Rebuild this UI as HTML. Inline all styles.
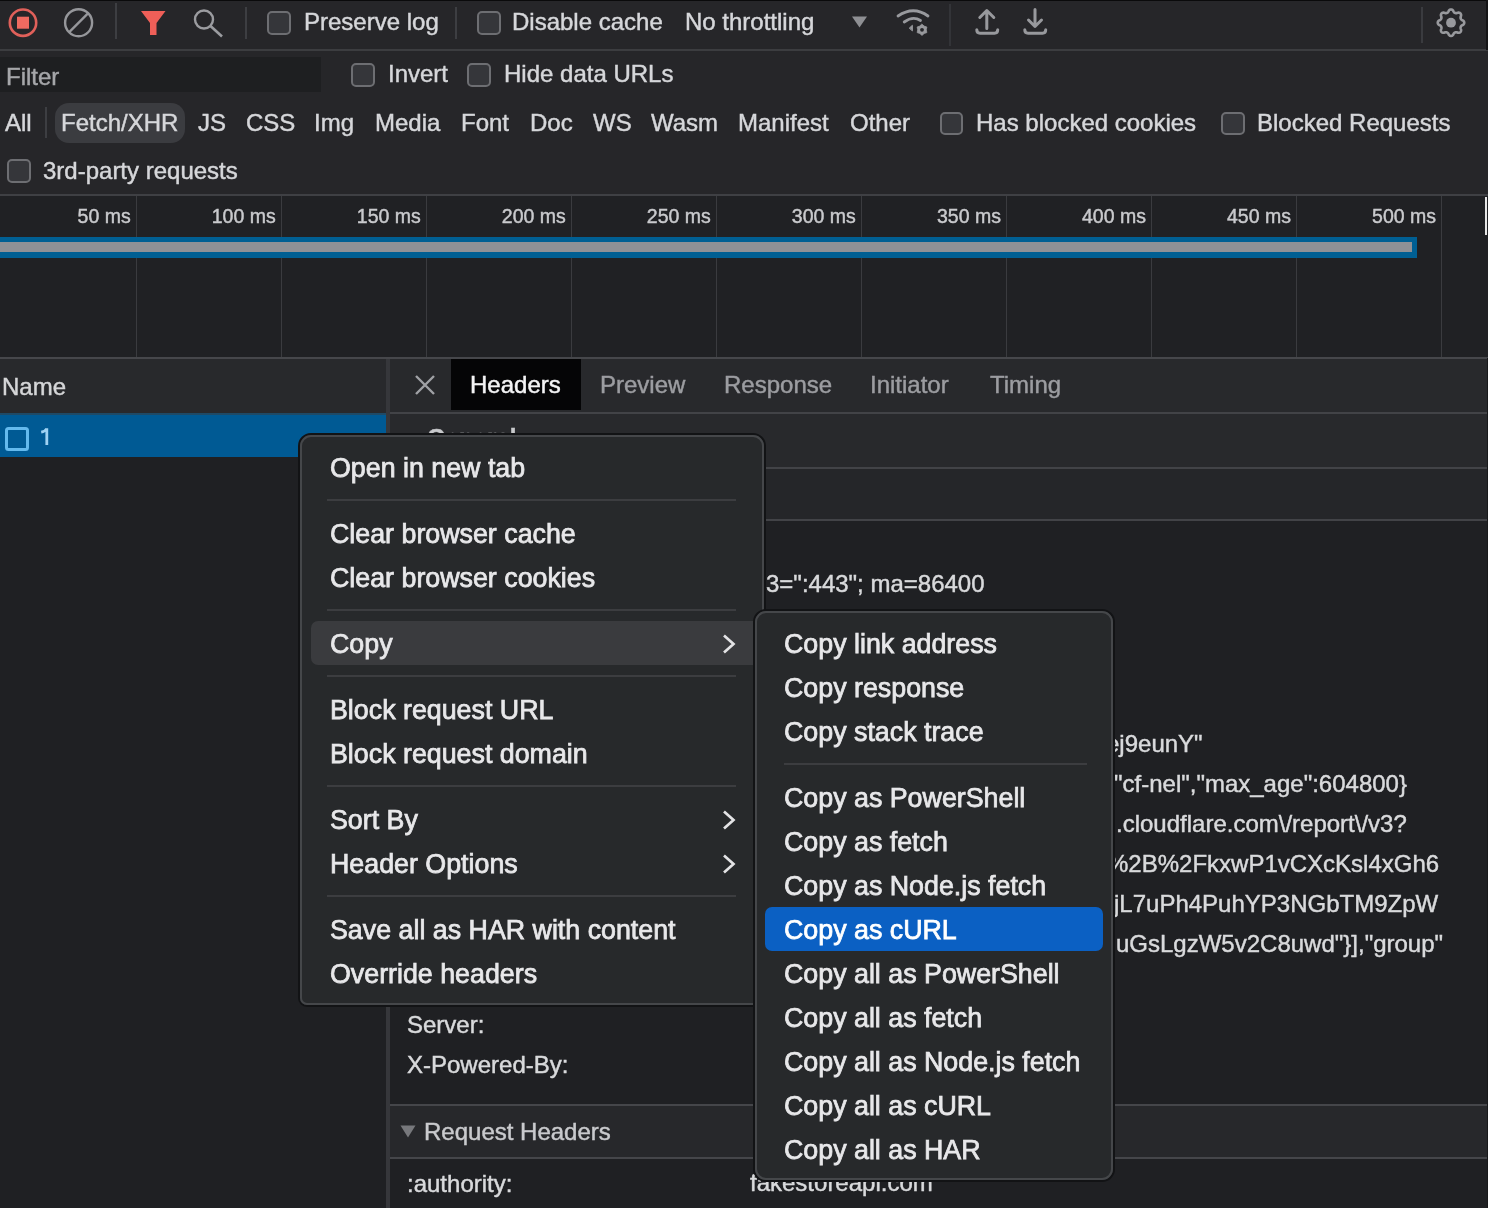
<!DOCTYPE html>
<html><head><meta charset="utf-8">
<style>
*{margin:0;padding:0;box-sizing:border-box}
html,body{width:1488px;height:1208px;overflow:hidden;background:#1f2023;font-family:"Liberation Sans",sans-serif;color:#e3e3e3}
.a{position:absolute}
.t{position:absolute;white-space:nowrap;line-height:1;will-change:transform;-webkit-text-stroke:0.45px currentColor}
.cb{position:absolute;border:2px solid #6d6e72;border-radius:5px;background:#35363a}
svg{position:absolute;overflow:visible}
</style></head><body>
<div class="a" style="left:0px;top:0px;width:1488px;height:50px;background:#262629;"></div>
<div class="a" style="left:0px;top:0px;width:1488px;height:1px;background:#0a0a0b;"></div>
<div class="a" style="left:0px;top:49px;width:1488px;height:2px;background:#3c3d40;"></div>
<svg style="left:0;top:0" width="60" height="50"><circle cx="23" cy="22.7" r="13.2" fill="none" stroke="#e0605a" stroke-width="2.6"/><rect x="17" y="16.7" width="12" height="12" fill="#ee6a60"/></svg>
<svg style="left:50px;top:0" width="60" height="50"><circle cx="28.6" cy="22.7" r="13.5" fill="none" stroke="#96979b" stroke-width="2.4"/><line x1="19" y1="32.3" x2="38.2" y2="13.1" stroke="#96979b" stroke-width="2.4"/></svg>
<div class="a" style="left:115px;top:3px;width:2px;height:36px;background:#3d3e42;"></div>
<svg style="left:130px;top:0" width="50" height="50"><path d="M11 11 H35.5 L26.5 23 V35 H20 V23 Z" fill="#ee5f58"/></svg>
<svg style="left:180px;top:0" width="60" height="50"><circle cx="24" cy="19.5" r="9" fill="none" stroke="#9b9ca0" stroke-width="2.4"/><line x1="30.5" y1="26" x2="42" y2="36.5" stroke="#9b9ca0" stroke-width="2.6"/></svg>
<div class="a" style="left:245px;top:7px;width:2px;height:32px;background:#3d3e42;"></div>
<div class="cb" style="left:267px;top:11px;width:24px;height:24px"></div>
<div class="t" style="left:304px;top:10.38px;font-size:24px;color:#d6d7da;">Preserve log</div>
<div class="a" style="left:455px;top:7px;width:2px;height:32px;background:#3d3e42;"></div>
<div class="cb" style="left:477px;top:11px;width:24px;height:24px"></div>
<div class="t" style="left:512px;top:10.38px;font-size:24px;color:#d6d7da;">Disable cache</div>
<div class="t" style="left:685px;top:10.38px;font-size:24px;color:#d6d7da;">No throttling</div>
<svg style="left:840px;top:0" width="40" height="50"><path d="M12 16.5 H27 L19.5 27.5 Z" fill="#8e8f93"/></svg>
<svg style="left:0;top:0" width="1488" height="50" fill="none" stroke="#98999d" stroke-linecap="round" stroke-linejoin="round">
<path d="M898 16 Q913.5 5.5 928 16" stroke-width="2.8"/><path d="M904.2 22 Q913 15.5 920.5 20.5" stroke-width="2.8"/>
<path d="M909.5 27.9 L912.4 25.3 L912.4 30.5Z" fill="#98999d" stroke-width="1"/>
<path d="M922.00 24.20 L924.15 26.08 L926.85 27.00 L926.30 29.80 L926.85 32.60 L924.15 33.52 L922.00 35.40 L919.85 33.52 L917.15 32.60 L917.70 29.80 L917.15 27.00 L919.85 26.08Z" fill="#98999d" stroke-width="0.8"/><circle cx="922" cy="29.8" r="1.9" fill="#26272a" stroke="none"/>
<path d="M986.8 28.4V10.8M979.8 17.5L986.8 10.5L993.8 17.5" stroke-width="3"/>
<path d="M976.8 29.8Q976.8 33.2 980 33.2H994.5Q997.7 33.2 997.7 29.8" stroke-width="3"/>
<path d="M1035 9.5V26.2M1028.5 20L1035 26.5L1041.5 20" stroke-width="3"/>
<path d="M1024.8 29.8Q1024.8 33.2 1028 33.2H1042.5Q1045.7 33.2 1045.7 29.8" stroke-width="3"/>
</svg>
<div class="a" style="left:949px;top:4px;width:2px;height:42px;background:#333438;"></div>
<div class="a" style="left:1421px;top:7px;width:2px;height:36px;background:#3a3b3f;"></div>
<svg style="left:0;top:0" width="1488" height="50"><path d="M1451.00 9.45 L1451.35 9.48 L1451.69 9.55 L1452.02 9.68 L1452.35 9.85 L1452.66 10.08 L1452.95 10.36 L1453.22 10.73 L1453.42 11.33 L1453.64 11.71 L1453.86 12.01 L1454.09 12.27 L1454.32 12.49 L1454.55 12.68 L1454.79 12.83 L1455.04 12.95 L1455.30 13.04 L1455.58 13.10 L1455.87 13.13 L1456.19 13.14 L1456.53 13.11 L1456.91 13.06 L1457.33 12.95 L1457.90 12.66 L1458.34 12.59 L1458.75 12.60 L1459.13 12.66 L1459.48 12.77 L1459.81 12.91 L1460.11 13.10 L1460.37 13.33 L1460.60 13.59 L1460.79 13.89 L1460.93 14.22 L1461.04 14.57 L1461.10 14.95 L1461.11 15.36 L1461.04 15.80 L1460.75 16.37 L1460.64 16.79 L1460.59 17.17 L1460.56 17.51 L1460.57 17.83 L1460.60 18.12 L1460.66 18.40 L1460.75 18.66 L1460.87 18.91 L1461.02 19.15 L1461.21 19.38 L1461.43 19.61 L1461.69 19.84 L1461.99 20.06 L1462.37 20.28 L1462.97 20.48 L1463.34 20.75 L1463.62 21.04 L1463.85 21.35 L1464.02 21.68 L1464.15 22.01 L1464.22 22.35 L1464.25 22.70 L1464.22 23.05 L1464.15 23.39 L1464.02 23.72 L1463.85 24.05 L1463.62 24.36 L1463.34 24.65 L1462.97 24.92 L1462.37 25.12 L1461.99 25.34 L1461.69 25.56 L1461.43 25.79 L1461.21 26.02 L1461.02 26.25 L1460.87 26.49 L1460.75 26.74 L1460.66 27.00 L1460.60 27.28 L1460.57 27.57 L1460.56 27.89 L1460.59 28.23 L1460.64 28.61 L1460.75 29.03 L1461.04 29.60 L1461.11 30.04 L1461.10 30.45 L1461.04 30.83 L1460.93 31.18 L1460.79 31.51 L1460.60 31.81 L1460.37 32.07 L1460.11 32.30 L1459.81 32.49 L1459.48 32.63 L1459.13 32.74 L1458.75 32.80 L1458.34 32.81 L1457.90 32.74 L1457.33 32.45 L1456.91 32.34 L1456.53 32.29 L1456.19 32.26 L1455.87 32.27 L1455.58 32.30 L1455.30 32.36 L1455.04 32.45 L1454.79 32.57 L1454.55 32.72 L1454.32 32.91 L1454.09 33.13 L1453.86 33.39 L1453.64 33.69 L1453.42 34.07 L1453.22 34.67 L1452.95 35.04 L1452.66 35.32 L1452.35 35.55 L1452.02 35.72 L1451.69 35.85 L1451.35 35.92 L1451.00 35.95 L1450.65 35.92 L1450.31 35.85 L1449.98 35.72 L1449.65 35.55 L1449.34 35.32 L1449.05 35.04 L1448.78 34.67 L1448.58 34.07 L1448.36 33.69 L1448.14 33.39 L1447.91 33.13 L1447.68 32.91 L1447.45 32.72 L1447.21 32.57 L1446.96 32.45 L1446.70 32.36 L1446.42 32.30 L1446.13 32.27 L1445.81 32.26 L1445.47 32.29 L1445.09 32.34 L1444.67 32.45 L1444.10 32.74 L1443.66 32.81 L1443.25 32.80 L1442.87 32.74 L1442.52 32.63 L1442.19 32.49 L1441.89 32.30 L1441.63 32.07 L1441.40 31.81 L1441.21 31.51 L1441.07 31.18 L1440.96 30.83 L1440.90 30.45 L1440.89 30.04 L1440.96 29.60 L1441.25 29.03 L1441.36 28.61 L1441.41 28.23 L1441.44 27.89 L1441.43 27.57 L1441.40 27.28 L1441.34 27.00 L1441.25 26.74 L1441.13 26.49 L1440.98 26.25 L1440.79 26.02 L1440.57 25.79 L1440.31 25.56 L1440.01 25.34 L1439.63 25.12 L1439.03 24.92 L1438.66 24.65 L1438.38 24.36 L1438.15 24.05 L1437.98 23.72 L1437.85 23.39 L1437.78 23.05 L1437.75 22.70 L1437.78 22.35 L1437.85 22.01 L1437.98 21.68 L1438.15 21.35 L1438.38 21.04 L1438.66 20.75 L1439.03 20.48 L1439.63 20.28 L1440.01 20.06 L1440.31 19.84 L1440.57 19.61 L1440.79 19.38 L1440.98 19.15 L1441.13 18.91 L1441.25 18.66 L1441.34 18.40 L1441.40 18.12 L1441.43 17.83 L1441.44 17.51 L1441.41 17.17 L1441.36 16.79 L1441.25 16.37 L1440.96 15.80 L1440.89 15.36 L1440.90 14.95 L1440.96 14.57 L1441.07 14.22 L1441.21 13.89 L1441.40 13.59 L1441.63 13.33 L1441.89 13.10 L1442.19 12.91 L1442.52 12.77 L1442.87 12.66 L1443.25 12.60 L1443.66 12.59 L1444.10 12.66 L1444.67 12.95 L1445.09 13.06 L1445.47 13.11 L1445.81 13.14 L1446.13 13.13 L1446.42 13.10 L1446.70 13.04 L1446.96 12.95 L1447.21 12.83 L1447.45 12.68 L1447.68 12.49 L1447.91 12.27 L1448.14 12.01 L1448.36 11.71 L1448.58 11.33 L1448.78 10.73 L1449.05 10.36 L1449.34 10.08 L1449.65 9.85 L1449.98 9.68 L1450.31 9.55 L1450.65 9.48Z" fill="none" stroke="#98999d" stroke-width="2.6" stroke-linejoin="round"/><circle cx="1451" cy="22.7" r="4.9" fill="#98999d"/></svg>
<div class="a" style="left:1486px;top:0px;width:2px;height:50px;background:#141416;"></div>
<div class="a" style="left:0px;top:51px;width:1488px;height:144px;background:#262629;"></div>
<div class="a" style="left:0px;top:57px;width:321px;height:35px;background:#1e1f21;"></div>
<div class="t" style="left:6px;top:64.68px;font-size:24px;color:#a6a7aa;">Filter</div>
<div class="cb" style="left:351px;top:63px;width:24px;height:24px"></div>
<div class="t" style="left:388px;top:62.18px;font-size:24px;color:#d6d7da;">Invert</div>
<div class="cb" style="left:467px;top:63px;width:24px;height:24px"></div>
<div class="t" style="left:504px;top:62.18px;font-size:24px;color:#d6d7da;">Hide data URLs</div>
<div class="t" style="left:5px;top:111.18px;font-size:24px;color:#d6d7da;">All</div>
<div class="a" style="left:45px;top:107px;width:2px;height:31px;background:#3d3e42;"></div>
<div class="a" style="left:55px;top:103px;width:130px;height:40px;background:#3b3c40;border-radius:14px"></div>
<div class="t" style="left:61px;top:111.18px;font-size:24px;color:#d6d7da;">Fetch/XHR</div>
<div class="t" style="left:198px;top:111.18px;font-size:24px;color:#d6d7da;">JS</div>
<div class="t" style="left:246px;top:111.18px;font-size:24px;color:#d6d7da;">CSS</div>
<div class="t" style="left:314px;top:111.18px;font-size:24px;color:#d6d7da;">Img</div>
<div class="t" style="left:375px;top:111.18px;font-size:24px;color:#d6d7da;">Media</div>
<div class="t" style="left:461px;top:111.18px;font-size:24px;color:#d6d7da;">Font</div>
<div class="t" style="left:530px;top:111.18px;font-size:24px;color:#d6d7da;">Doc</div>
<div class="t" style="left:593px;top:111.18px;font-size:24px;color:#d6d7da;">WS</div>
<div class="t" style="left:651px;top:111.18px;font-size:24px;color:#d6d7da;">Wasm</div>
<div class="t" style="left:738px;top:111.18px;font-size:24px;color:#d6d7da;">Manifest</div>
<div class="t" style="left:850px;top:111.18px;font-size:24px;color:#d6d7da;">Other</div>
<div class="cb" style="left:940px;top:112px;width:23px;height:23px"></div>
<div class="t" style="left:976px;top:111.18px;font-size:24px;color:#d6d7da;">Has blocked cookies</div>
<div class="cb" style="left:1221px;top:112px;width:24px;height:23px"></div>
<div class="t" style="left:1257px;top:111.18px;font-size:24px;color:#d6d7da;">Blocked Requests</div>
<div class="cb" style="left:7px;top:159px;width:24px;height:24px"></div>
<div class="t" style="left:43px;top:158.68px;font-size:24px;color:#d6d7da;">3rd-party requests</div>
<div class="a" style="left:0px;top:194px;width:1488px;height:2px;background:#3f4044;"></div>
<div class="a" style="left:0px;top:196px;width:1488px;height:162px;background:#202124;"></div>
<div class="a" style="left:136px;top:196px;width:1px;height:161px;background:#3a3b3f;"></div>
<div class="t" style="left:0px;top:206.99px;font-size:19.5px;color:#c9cacd;width:130.7px;text-align:right;left:0">50 ms</div>
<div class="a" style="left:281px;top:196px;width:1px;height:161px;background:#3a3b3f;"></div>
<div class="t" style="left:0px;top:206.99px;font-size:19.5px;color:#c9cacd;width:275.7px;text-align:right;left:0">100 ms</div>
<div class="a" style="left:426px;top:196px;width:1px;height:161px;background:#3a3b3f;"></div>
<div class="t" style="left:0px;top:206.99px;font-size:19.5px;color:#c9cacd;width:420.8px;text-align:right;left:0">150 ms</div>
<div class="a" style="left:571px;top:196px;width:1px;height:161px;background:#3a3b3f;"></div>
<div class="t" style="left:0px;top:206.99px;font-size:19.5px;color:#c9cacd;width:565.8px;text-align:right;left:0">200 ms</div>
<div class="a" style="left:716px;top:196px;width:1px;height:161px;background:#3a3b3f;"></div>
<div class="t" style="left:0px;top:206.99px;font-size:19.5px;color:#c9cacd;width:710.8px;text-align:right;left:0">250 ms</div>
<div class="a" style="left:861px;top:196px;width:1px;height:161px;background:#3a3b3f;"></div>
<div class="t" style="left:0px;top:206.99px;font-size:19.5px;color:#c9cacd;width:855.8px;text-align:right;left:0">300 ms</div>
<div class="a" style="left:1006px;top:196px;width:1px;height:161px;background:#3a3b3f;"></div>
<div class="t" style="left:0px;top:206.99px;font-size:19.5px;color:#c9cacd;width:1000.9px;text-align:right;left:0">350 ms</div>
<div class="a" style="left:1151px;top:196px;width:1px;height:161px;background:#3a3b3f;"></div>
<div class="t" style="left:0px;top:206.99px;font-size:19.5px;color:#c9cacd;width:1145.9px;text-align:right;left:0">400 ms</div>
<div class="a" style="left:1296px;top:196px;width:1px;height:161px;background:#3a3b3f;"></div>
<div class="t" style="left:0px;top:206.99px;font-size:19.5px;color:#c9cacd;width:1290.9px;text-align:right;left:0">450 ms</div>
<div class="a" style="left:1441px;top:196px;width:1px;height:161px;background:#3a3b3f;"></div>
<div class="t" style="left:0px;top:206.99px;font-size:19.5px;color:#c9cacd;width:1436.0px;text-align:right;left:0">500 ms</div>
<div class="a" style="left:0px;top:237px;width:1417px;height:21px;background:#005f93;"></div>
<div class="a" style="left:0px;top:242px;width:1412px;height:10px;background:#8f9196;"></div>
<div class="a" style="left:1485px;top:197px;width:2px;height:38px;background:#e6e6e6;"></div>
<div class="a" style="left:0px;top:357px;width:1488px;height:2px;background:#46474b;"></div>
<div class="a" style="left:0px;top:359px;width:388px;height:54px;background:#28292c;"></div>
<div class="t" style="left:2px;top:374.68px;font-size:24px;color:#d5d6d8;">Name</div>
<div class="a" style="left:0px;top:413px;width:388px;height:44px;background:#005a94;"></div>
<div class="a" style="left:0px;top:413px;width:388px;height:2px;background:#1f4a66;"></div>
<div class="a" style="left:5px;top:427px;width:24px;height:24px;border:3px solid #64baee;border-radius:3.5px"></div>
<svg style="left:0;top:0" width="60" height="460"><path d="M46.8 428.2V445M46.8 428.6Q45 431.6 41.2 432.2" fill="none" stroke="#9fd2f3" stroke-width="2.8"/></svg>
<div class="a" style="left:386px;top:359px;width:4px;height:849px;background:#36373b;"></div>
<div class="a" style="left:390px;top:359px;width:1098px;height:53px;background:#28292c;"></div>
<svg style="left:405px;top:365px" width="40" height="40"><path d="M11 11L29 29M29 11L11 29" stroke="#a0a1a5" stroke-width="2.4"/></svg>
<div class="a" style="left:451px;top:359px;width:130px;height:51px;background:#050506;"></div>
<div class="t" style="left:470px;top:372.68px;font-size:24px;color:#f4f4f5;">Headers</div>
<div class="t" style="left:600px;top:372.68px;font-size:24px;color:#9c9da1;">Preview</div>
<div class="t" style="left:724px;top:372.68px;font-size:24px;color:#9c9da1;">Response</div>
<div class="t" style="left:870px;top:372.68px;font-size:24px;color:#9c9da1;">Initiator</div>
<div class="t" style="left:990px;top:372.68px;font-size:24px;color:#9c9da1;">Timing</div>
<div class="a" style="left:390px;top:412px;width:1098px;height:2px;background:#424347;"></div>
<div class="a" style="left:390px;top:414px;width:1098px;height:53px;background:#28292c;"></div>
<div class="t" style="left:427px;top:425.68px;font-size:24px;color:#c8c9cc;font-weight:bold">General</div>
<div class="a" style="left:390px;top:467px;width:1098px;height:2px;background:#424347;"></div>
<div class="a" style="left:390px;top:469px;width:1098px;height:50px;background:#252629;"></div>
<div class="a" style="left:390px;top:519px;width:1098px;height:2px;background:#424347;"></div>
<div class="a" style="left:390px;top:521px;width:1098px;height:583px;background:#1f2023;"></div>
<div class="t" style="left:766px;top:572.18px;font-size:24px;color:#d9dadc;">3=":443"; ma=86400</div>
<div class="t" style="left:1106px;top:732.18px;font-size:24px;color:#d9dadc;">ej9eunY"</div>
<div class="t" style="left:1114px;top:772.18px;font-size:24px;color:#d9dadc;">"cf-nel","max_age":604800}</div>
<div class="t" style="left:1116px;top:812.18px;font-size:24px;color:#d9dadc;">.cloudflare.com\/report\/v3?</div>
<div class="t" style="left:1107px;top:852.18px;font-size:24px;color:#d9dadc;">%2B%2FkxwP1vCXcKsl4xGh6</div>
<div class="t" style="left:1114px;top:892.18px;font-size:24px;color:#d9dadc;">jL7uPh4PuhYP3NGbTM9ZpW</div>
<div class="t" style="left:1116px;top:932.18px;font-size:24px;color:#d9dadc;">uGsLgzW5v2C8uwd"}],"group"</div>
<div class="t" style="left:407px;top:1013.18px;font-size:24px;color:#d9dadc;">Server:</div>
<div class="t" style="left:407px;top:1053.18px;font-size:24px;color:#d9dadc;">X-Powered-By:</div>
<div class="a" style="left:390px;top:1104px;width:1098px;height:2px;background:#45464a;"></div>
<div class="a" style="left:390px;top:1106px;width:1098px;height:52px;background:#27282b;"></div>
<svg style="left:395px;top:1120px" width="30" height="30"><path d="M5.5 5.5H20.5L13 17.5Z" fill="#77787c"/></svg>
<div class="t" style="left:424px;top:1119.68px;font-size:24px;color:#c9cacd;">Request Headers</div>
<div class="a" style="left:390px;top:1157px;width:1098px;height:2px;background:#45464a;"></div>
<div class="t" style="left:407px;top:1171.68px;font-size:24px;color:#d9dadc;">:authority:</div>
<div class="t" style="left:750px;top:1171.18px;font-size:24px;color:#d9dadc;">fakestoreapi.com</div>
<div class="a" style="left:1487px;top:358px;width:1px;height:850px;background:#18191b;"></div>
<div class="a" style="left:298px;top:433px;width:468px;height:574px;background:#27292b;border:2px solid #121315;border-radius:13px 13px 9px 9px"></div>
<div class="a" style="left:300px;top:435px;width:464px;height:570px;border:2px solid #45474a;border-radius:11px 11px 7px 7px"></div>
<div class="a" style="left:327px;top:499px;width:409px;height:1.6px;background:#3c3d40;"></div>
<div class="a" style="left:327px;top:609px;width:409px;height:1.6px;background:#3c3d40;"></div>
<div class="a" style="left:327px;top:675px;width:409px;height:1.6px;background:#3c3d40;"></div>
<div class="a" style="left:327px;top:785px;width:409px;height:1.6px;background:#3c3d40;"></div>
<div class="a" style="left:327px;top:895px;width:409px;height:1.6px;background:#3c3d40;"></div>
<div class="a" style="left:311px;top:621px;width:452px;height:44px;background:#3a3b3e;border-radius:7px"></div>
<div class="t" style="left:330px;top:455.11px;font-size:26.8px;color:#e8e8ea;-webkit-text-stroke:0.75px #e8e8ea">Open in new tab</div>
<div class="t" style="left:330px;top:521.11px;font-size:26.8px;color:#e8e8ea;-webkit-text-stroke:0.75px #e8e8ea">Clear browser cache</div>
<div class="t" style="left:330px;top:565.11px;font-size:26.8px;color:#e8e8ea;-webkit-text-stroke:0.75px #e8e8ea">Clear browser cookies</div>
<div class="t" style="left:330px;top:631.11px;font-size:26.8px;color:#e8e8ea;-webkit-text-stroke:0.75px #e8e8ea">Copy</div>
<div class="t" style="left:330px;top:697.11px;font-size:26.8px;color:#e8e8ea;-webkit-text-stroke:0.75px #e8e8ea">Block request URL</div>
<div class="t" style="left:330px;top:741.11px;font-size:26.8px;color:#e8e8ea;-webkit-text-stroke:0.75px #e8e8ea">Block request domain</div>
<div class="t" style="left:330px;top:807.11px;font-size:26.8px;color:#e8e8ea;-webkit-text-stroke:0.75px #e8e8ea">Sort By</div>
<div class="t" style="left:330px;top:851.11px;font-size:26.8px;color:#e8e8ea;-webkit-text-stroke:0.75px #e8e8ea">Header Options</div>
<div class="t" style="left:330px;top:917.11px;font-size:26.8px;color:#e8e8ea;-webkit-text-stroke:0.75px #e8e8ea">Save all as HAR with content</div>
<div class="t" style="left:330px;top:961.11px;font-size:26.8px;color:#e8e8ea;-webkit-text-stroke:0.75px #e8e8ea">Override headers</div>
<svg style="left:718px;top:633px" width="24" height="24"><path d="M6 2.5L15.5 11L6 19.5" fill="none" stroke="#e3e3e5" stroke-width="2.7"/></svg>
<svg style="left:718px;top:809px" width="24" height="24"><path d="M6 2.5L15.5 11L6 19.5" fill="none" stroke="#e3e3e5" stroke-width="2.7"/></svg>
<svg style="left:718px;top:853px" width="24" height="24"><path d="M6 2.5L15.5 11L6 19.5" fill="none" stroke="#e3e3e5" stroke-width="2.7"/></svg>
<div class="a" style="left:753px;top:609px;width:362px;height:573px;background:#27292b;border:2px solid #121315;border-radius:13px"></div>
<div class="a" style="left:755px;top:611px;width:358px;height:569px;border:2px solid #45474a;border-radius:11px"></div>
<div class="a" style="left:784px;top:763px;width:303px;height:1.6px;background:#3c3d40;"></div>
<div class="a" style="left:765px;top:907px;width:338px;height:44px;background:#0b60c3;border-radius:7px"></div>
<div class="t" style="left:784px;top:631.11px;font-size:26.8px;color:#e8e8ea;-webkit-text-stroke:0.75px #e8e8ea">Copy link address</div>
<div class="t" style="left:784px;top:675.11px;font-size:26.8px;color:#e8e8ea;-webkit-text-stroke:0.75px #e8e8ea">Copy response</div>
<div class="t" style="left:784px;top:719.11px;font-size:26.8px;color:#e8e8ea;-webkit-text-stroke:0.75px #e8e8ea">Copy stack trace</div>
<div class="t" style="left:784px;top:785.11px;font-size:26.8px;color:#e8e8ea;-webkit-text-stroke:0.75px #e8e8ea">Copy as PowerShell</div>
<div class="t" style="left:784px;top:829.11px;font-size:26.8px;color:#e8e8ea;-webkit-text-stroke:0.75px #e8e8ea">Copy as fetch</div>
<div class="t" style="left:784px;top:873.11px;font-size:26.8px;color:#e8e8ea;-webkit-text-stroke:0.75px #e8e8ea">Copy as Node.js fetch</div>
<div class="t" style="left:784px;top:917.11px;font-size:26.8px;color:#ffffff;-webkit-text-stroke:0.75px #ffffff">Copy as cURL</div>
<div class="t" style="left:784px;top:961.11px;font-size:26.8px;color:#e8e8ea;-webkit-text-stroke:0.75px #e8e8ea">Copy all as PowerShell</div>
<div class="t" style="left:784px;top:1005.11px;font-size:26.8px;color:#e8e8ea;-webkit-text-stroke:0.75px #e8e8ea">Copy all as fetch</div>
<div class="t" style="left:784px;top:1049.11px;font-size:26.8px;color:#e8e8ea;-webkit-text-stroke:0.75px #e8e8ea">Copy all as Node.js fetch</div>
<div class="t" style="left:784px;top:1093.11px;font-size:26.8px;color:#e8e8ea;-webkit-text-stroke:0.75px #e8e8ea">Copy all as cURL</div>
<div class="t" style="left:784px;top:1137.11px;font-size:26.8px;color:#e8e8ea;-webkit-text-stroke:0.75px #e8e8ea">Copy all as HAR</div>
</body></html>
